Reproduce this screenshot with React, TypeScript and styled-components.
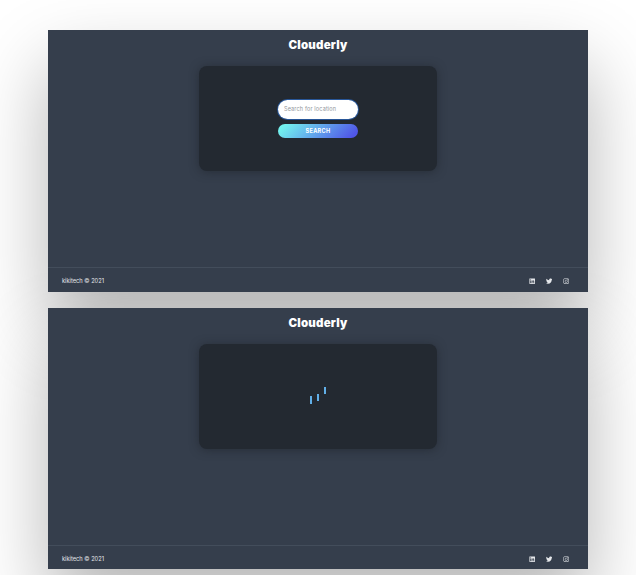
import React from "react";
import styled, { createGlobalStyle } from "styled-components";
import { FaLinkedin, FaTwitter, FaInstagram } from "react-icons/fa";

const GlobalStyle = createGlobalStyle`
  * { box-sizing: border-box; }
  html, body { margin: 0; background: #fff; }
  body { font-family: Inter, "Liberation Sans", sans-serif; }
`;

const Page = styled.main`
  width: 636px;
  height: 575px;
  padding: 30px 48px 0;
  overflow: hidden;
  display: flex;
  flex-direction: column;
  gap: 16.3px;
  background: #fff;
`;

const Frame = styled.section`
  flex: none;
  height: 261.5px;
  box-shadow: 0 36px 70px rgba(0, 0, 0, 0.29);
`;

/* Stacked above the frames so neither shadow tints the neighbouring window. */
const Screen = styled.div`
  position: relative;
  z-index: 1;
  height: 100%;
  display: flex;
  flex-direction: column;
  align-items: center;
  background: #353e4c;
  color: #fff;
`;

const Title = styled.h1`
  margin: 0;
  height: 36px;
  padding-top: 7px;
  font-size: 11.5px;
  line-height: 16px;
  font-weight: 900;
  letter-spacing: 0.2px;
`;

const Card = styled.div`
  width: 238px;
  height: 105px;
  border-radius: 8px;
  background: #232931;
  box-shadow: 0 1px 10px rgba(25, 29, 36, 0.5);
  display: flex;
  flex-direction: column;
  align-items: center;
  justify-content: center;
`;

const SearchForm = styled.form`
  width: 80px;
  display: flex;
  flex-direction: column;
  gap: 5px;
`;

const SearchInput = styled.input`
  width: 100%;
  height: 19px;
  padding: 0 6px;
  border: 0;
  border-radius: 9.5px;
  outline: none;
  background: #fff;
  box-shadow: 0 0 0 1px #285698;
  font: 400 5.5px Inter, sans-serif;
  letter-spacing: 0.16px;
  color: #353e4c;
  &::placeholder { color: #92969c; opacity: 1; }
`;

const SearchButton = styled.button`
  height: 14px;
  padding: 0;
  border: 0;
  border-radius: 7px;
  background: linear-gradient(135deg, #72f2ee 8%, #5056e8 92%);
  color: #fff;
  font: 700 5.6px/14px Inter, sans-serif;
  letter-spacing: 0.3px;
`;

const Loader = styled.div`
  display: flex;
  gap: 5px;
  height: 18px;
  margin-bottom: 1px;
`;

const LoaderBar = styled.span<{ $drop: number }>`
  width: 2.2px;
  height: 7.5px;
  margin-top: ${({ $drop }) => $drop}px;
  background: #61afe8;
`;

const Footer = styled.footer`
  width: 100%;
  height: 24.5px;
  margin-top: auto;
  padding: 3px 19px 0 14px;
  border-top: 1px solid #434d5b;
  display: flex;
  align-items: center;
  justify-content: space-between;
  font-size: 5.7px;
  line-height: 8px;
  color: #e6e8eb;
`;

const Socials = styled.div`
  display: flex;
  gap: 10.5px;
  svg { display: block; width: 6.4px; height: 6.4px; }
`;

function Window({ children }: { children: React.ReactNode }) {
  return (
    <Frame>
      <Screen>
        <Title>Clouderly</Title>
        <Card>{children}</Card>
        <Footer>
          <span>kikitech © 2021</span>
          <Socials>
            <FaLinkedin />
            <FaTwitter />
            <FaInstagram />
          </Socials>
        </Footer>
      </Screen>
    </Frame>
  );
}

export default function App() {
  return (
    <>
      <GlobalStyle />
      <Page>
        <Window>
          <SearchForm onSubmit={(e) => e.preventDefault()}>
            <SearchInput placeholder="Search for location" />
            <SearchButton>SEARCH</SearchButton>
          </SearchForm>
        </Window>
        <Window>
          <Loader>
            <LoaderBar $drop={9.5} />
            <LoaderBar $drop={7} />
            <LoaderBar $drop={0} />
          </Loader>
        </Window>
      </Page>
    </>
  );
}
